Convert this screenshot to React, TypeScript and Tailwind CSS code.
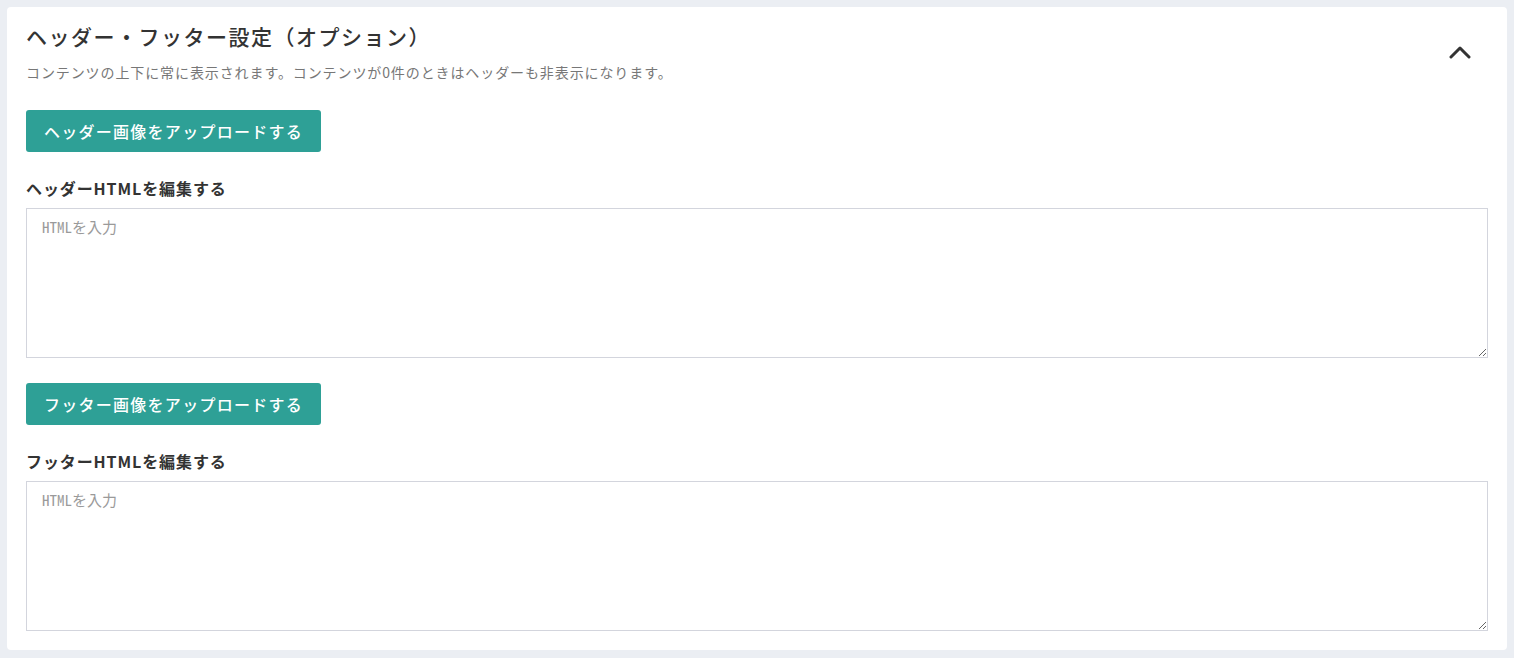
import React from 'react';

const jp = "font-['Noto_Sans_CJK_JP','Noto_Sans',sans-serif]";

function ChevronUp() {
  return (
    <svg width="22" height="14" viewBox="0 0 22 14" fill="none" className="shrink-0">
      <path d="M2 12 L11 3 L20 12" stroke="#333333" strokeWidth="3" strokeLinecap="round" strokeLinejoin="round" />
    </svg>
  );
}

function Section({ kind }: { kind: 'ヘッダー' | 'フッター' }) {
  return (
    <div className="flex flex-col">
      <button
        type="button"
        className="self-start h-[42px] w-[295px] rounded-[3px] bg-[#2ea096] text-white text-[16px] tracking-[0.08em] font-medium"
      >
        {kind}画像をアップロードする
      </button>
      <label className="mt-[24px] mb-[8px] text-[16px] font-bold text-[#333333] tracking-[0.9px] leading-[24px]">
        {kind}HTMLを編集する
      </label>
      <textarea
        placeholder="HTMLを入力"
        className="h-[150px] w-full border border-[#d3d5dd] px-[15px] pt-[8px] text-[15px] leading-[20px] font-['Noto_Sans_Mono_CJK_JP','Noto_Sans_CJK_JP',monospace] placeholder:text-[#9a9a9a] outline-none"
      />
    </div>
  );
}

export default function App() {
  return (
    <div className={`min-h-[658px] bg-[#ebeef3] p-[7px] ${jp}`}>
      <div className="rounded-[4px] bg-white px-[19px] pt-[13px] pb-[19px]">
        <div className="flex items-center justify-between">
          <div>
            <h2 className="text-[21px] leading-[32px] tracking-[1.5px] font-medium text-[#333333]">
              ヘッダー・フッター設定（オプション）
            </h2>
            <p className="mt-[10px] text-[14px] leading-[20px] tracking-[0.9px] text-[#777777]">
              コンテンツの上下に常に表示されます。コンテンツが0件のときはヘッダーも非表示になります。
            </p>
          </div>
          <div className="mr-[17px] mt-[2px]">
            <ChevronUp />
          </div>
        </div>
        <div className="mt-[28px]">
          <Section kind="ヘッダー" />
        </div>
        <div className="mt-[25px]">
          <Section kind="フッター" />
        </div>
      </div>
    </div>
  );
}
